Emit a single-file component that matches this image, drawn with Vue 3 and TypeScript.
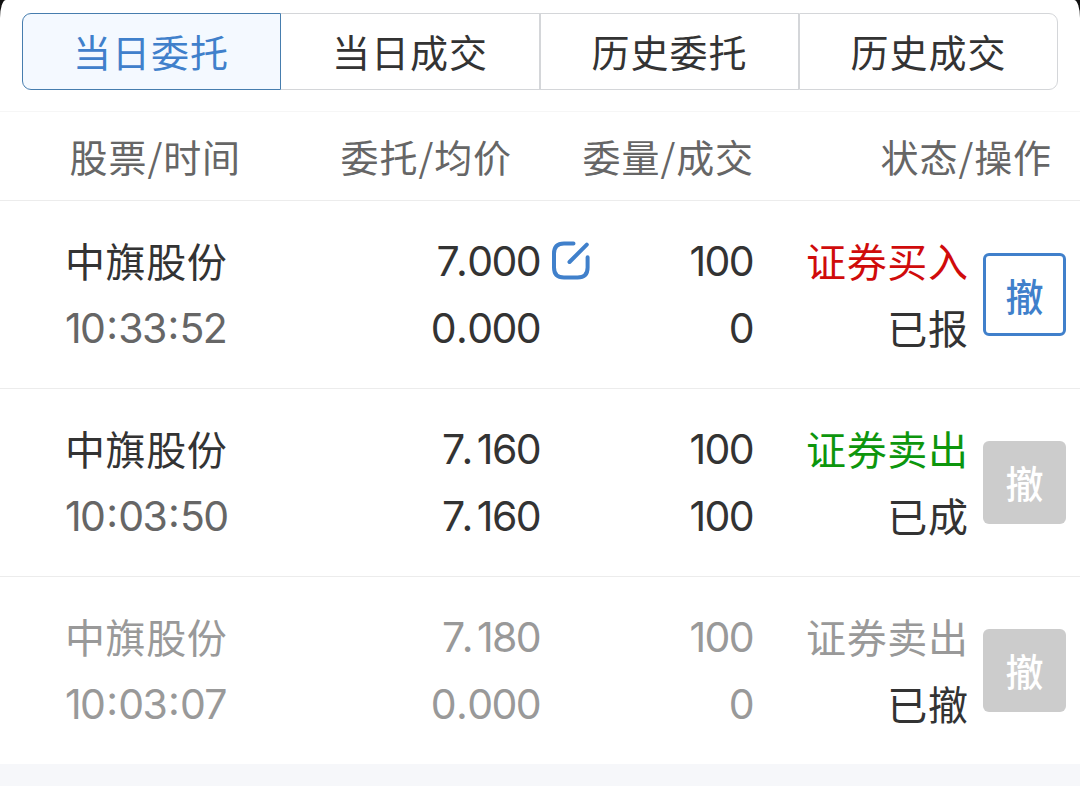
<script setup lang="ts">
interface Order {
  name: string
  time: string
  price: string
  average: string
  amount: string
  filled: string
  side: string
  sideClass: string
  status: string
  active: boolean
  muted: boolean
}

const tabs: string[] = ['当日委托', '当日成交', '历史委托', '历史成交']
const columns: string[] = ['股票/时间', '委托/均价', '委量/成交', '状态/操作']

const orders: Order[] = [
  { name: '中旗股份', time: '10:33:52', price: '7.000', average: '0.000', amount: '100', filled: '0', side: '证券买入', sideClass: 'buy', status: '已报', active: true, muted: false },
  { name: '中旗股份', time: '10:03:50', price: '7.160', average: '7.160', amount: '100', filled: '100', side: '证券卖出', sideClass: 'sell', status: '已成', active: false, muted: false },
  { name: '中旗股份', time: '10:03:07', price: '7.180', average: '0.000', amount: '100', filled: '0', side: '证券卖出', sideClass: 'done', status: '已撤', active: false, muted: true },
]

// Splits a figure so its separators can be spaced apart from the digits.
const parts = (value: string): string[] => value.split(/([.:])/)

// A point sits closer to a preceding 7 and further from a following 1.
const partClass = (all: string[], i: number): string[] => {
  if (all[i] === ':') return ['colon']
  if (all[i] !== '.') return []
  const classes = ['dot']
  if (all[i - 1].endsWith('7')) classes.push('after-seven')
  if (all[i + 1].startsWith('1')) classes.push('before-one')
  return classes
}
</script>

<template>
  <div class="screen">
    <div class="sheet">
      <nav class="tabs">
        <button v-for="(tab, i) in tabs" :key="tab" class="tab" :class="{ selected: i === 0 }">{{ tab }}</button>
      </nav>
      <div class="row head">
        <span v-for="column in columns" :key="column" class="heading">{{ column }}</span>
      </div>
      <div v-for="order in orders" :key="order.time" class="row order" :class="{ muted: order.muted }">
        <div class="cell stock">
          <span>{{ order.name }}</span>
          <span class="num time"><span v-for="(p, i) in parts(order.time)" :key="i" :class="partClass(parts(order.time), i)">{{ p }}</span></span>
        </div>
        <div class="cell right">
          <span class="num"><span v-for="(p, i) in parts(order.price)" :key="i" :class="partClass(parts(order.price), i)">{{ p }}</span></span>
          <span class="num"><span v-for="(p, i) in parts(order.average)" :key="i" :class="partClass(parts(order.average), i)">{{ p }}</span></span>
        </div>
        <div class="edit">
          <svg v-if="order.active" width="42" height="42" viewBox="0 0 42 42" fill="none" stroke="#4080cb" stroke-width="4" stroke-linecap="round">
            <path d="M23.5 3.6H14Q4 3.6 4 13.6V27.4Q4 37.4 14 37.4H27.6Q37.6 37.4 37.6 27.4V17.2" />
            <path d="M19.5 22L36.8 4.6" />
          </svg>
        </div>
        <div class="cell right">
          <span class="num">{{ order.amount }}</span>
          <span class="num">{{ order.filled }}</span>
        </div>
        <div class="cell right">
          <span :class="order.sideClass">{{ order.side }}</span>
          <span class="status">{{ order.status }}</span>
        </div>
        <button class="cancel" :class="{ active: order.active }">撤</button>
      </div>
    </div>
  </div>
</template>

<style>
body {
  margin: 0;
  background: #f6f7fa;
}
</style>

<style scoped>
.screen {
  box-sizing: border-box;
  width: 1080px;
  height: 786px;
  overflow: hidden;
  background: linear-gradient(#111 0 30px, #f6f7fa 30px);
  font-family: "Noto Sans CJK SC", sans-serif;
  color: #333;
}
.sheet {
  box-sizing: border-box;
  height: 764px;
  padding-top: 13px;
  background: #fff;
  border-radius: 6px 6px 0 0 / 18px 18px 0 0;
}
button {
  padding: 0;
  font-family: inherit;
}
.tabs {
  display: grid;
  grid-template-columns: repeat(4, 259px);
  margin: 0 22px 21px;
}
.tab {
  box-sizing: border-box;
  height: 77px;
  border: 1px solid #d4d6d9;
  background: #fff;
  color: #333;
  font-size: 38px;
  letter-spacing: 1px;
  padding-bottom: 3px;
}
.tab:first-child {
  border-radius: 9px 0 0 9px;
  padding-right: 1px;
}
.tab:last-child { border-radius: 0 9px 9px 0; }
.tab:nth-child(2) { border-left: 0; }
.tab.selected {
  border-color: #467dae;
  background: #f4f9ff;
  color: #4080cb;
}
.row {
  box-sizing: border-box;
  display: grid;
  align-items: center;
}
.head {
  height: 90px;
  grid-template-columns: 241px 271px 242px 298px;
  border-top: 1px solid #f6f6f6;
  border-bottom: 1px solid #ececec;
}
.heading {
  text-align: right;
  color: #666;
  font-size: 38px;
  letter-spacing: 0.9px;
  line-height: 60px;
}
.order {
  height: 188px;
  padding: 0 14px 0 65px;
  grid-template-columns: 300px 175px 60px 153px 215.5px 97.5px;
  border-bottom: 1px solid #ececec;
}
.order:last-child { border-bottom-color: #f6f7fa; }
.cell {
  display: flex;
  flex-direction: column;
  font-size: 40px;
  letter-spacing: 0.6px;
  line-height: 67px;
  padding-bottom: 1px;
  white-space: nowrap;
}
.right { text-align: right; }
.num {
  position: relative;
  top: 1px;
  font-family: Inter, sans-serif;
  font-size: 41px;
  font-weight: 400;
  font-kerning: none;
  letter-spacing: -1.6px;
}
.dot { margin: 0 1px; }
.dot.after-seven { margin-left: -2px; }
.dot.before-one { margin-right: 5px; }
.colon {
  margin: 0 1.8px;
  font-feature-settings: "case";
}
.time {
  color: #666;
}
.edit {
  align-self: start;
  height: 42px;
  padding: 39px 0 0 10px;
}
.buy { color: #d00b0b; }
.sell { color: #0d960d; }
.muted .cell,
.muted .time { color: #999; }
.muted .status { color: #333; }
.cancel {
  justify-self: end;
  box-sizing: border-box;
  width: 83px;
  height: 83px;
  border: 0;
  border-radius: 6px;
  background: #ccc;
  color: #fff;
  font-size: 38px;
  font-weight: 500;
  line-height: 77px;
  padding-bottom: 2px;
}
.cancel.active {
  border: 3px solid #4080cb;
  background: #fff;
  color: #4080cb;
}
</style>
